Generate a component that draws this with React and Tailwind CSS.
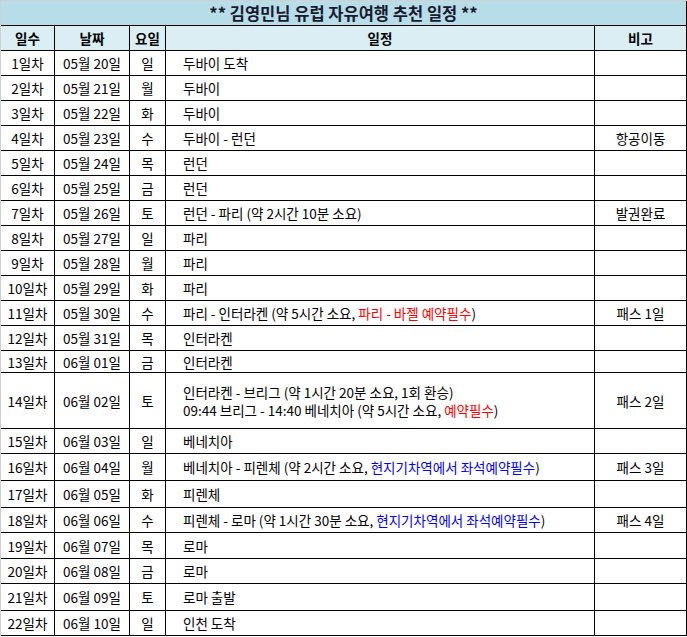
const rows = [
  { n: "1일차", d: "05월 20일", w: "일", plan: [["두바이 도착"]], h: 25 },
  { n: "2일차", d: "05월 21일", w: "월", plan: [["두바이"]], h: 25 },
  { n: "3일차", d: "05월 22일", w: "화", plan: [["두바이"]], h: 25 },
  { n: "4일차", d: "05월 23일", w: "수", plan: [["두바이 - 런던"]], note: "항공이동", h: 25 },
  { n: "5일차", d: "05월 24일", w: "목", plan: [["런던"]], h: 25 },
  { n: "6일차", d: "05월 25일", w: "금", plan: [["런던"]], h: 25 },
  { n: "7일차", d: "05월 26일", w: "토", plan: [["런던 - 파리 (약 2시간 10분 소요)"]], note: "발권완료", h: 25 },
  { n: "8일차", d: "05월 27일", w: "일", plan: [["파리"]], h: 25 },
  { n: "9일차", d: "05월 28일", w: "월", plan: [["파리"]], h: 25 },
  { n: "10일차", d: "05월 29일", w: "화", plan: [["파리"]], h: 25 },
  {
    n: "11일차", d: "05월 30일", w: "수",
    plan: [["파리 - 인터라켄 (약 5시간 소요, ", ["red", "파리 - 바젤 예약필수"], ")"]],
    note: "패스 1일", h: 25,
  },
  { n: "12일차", d: "05월 31일", w: "목", plan: [["인터라켄"]], h: 25 },
  { n: "13일차", d: "06월 01일", w: "금", plan: [["인터라켄"]], h: 22 },
  {
    n: "14일차", d: "06월 02일", w: "토",
    plan: [
      ["인터라켄 - 브리그 (약 1시간 20분 소요, 1회 환승)"],
      ["09:44 브리그 - 14:40 베네치아 (약 5시간 소요, ", ["red", "예약필수"], ")"],
    ],
    note: "패스 2일", h: 56,
  },
  { n: "15일차", d: "06월 03일", w: "일", plan: [["베네치아"]], h: 25 },
  {
    n: "16일차", d: "06월 04일", w: "월",
    plan: [["베네치아 - 피렌체 (약 2시간 소요, ", ["blue", "현지기차역에서 좌석예약필수"], ")"]],
    note: "패스 3일", h: 27,
  },
  { n: "17일차", d: "06월 05일", w: "화", plan: [["피렌체"]], h: 27 },
  {
    n: "18일차", d: "06월 06일", w: "수",
    plan: [["피렌체 - 로마 (약 1시간 30분 소요, ", ["blue", "현지기차역에서 좌석예약필수"], ")"]],
    note: "패스 4일", h: 25,
  },
  { n: "19일차", d: "06월 07일", w: "목", plan: [["로마"]], h: 26 },
  { n: "20일차", d: "06월 08일", w: "금", plan: [["로마"]], h: 25 },
  { n: "21일차", d: "06월 09일", w: "토", plan: [["로마 출발"]], h: 27 },
  { n: "22일차", d: "06월 10일", w: "일", plan: [["인천 도착"]], h: 25 },
];

const cell = "flex items-center justify-center border-r border-black";

function Line({ parts }) {
  return (
    <div>
      {parts.map((p, i) =>
        typeof p === "string" ? (
          <span key={i}>{p}</span>
        ) : (
          <span key={i} className={p[0] === "red" ? "text-[#ff0000]" : "text-[#0000ff]"}>
            {p[1]}
          </span>
        )
      )}
    </div>
  );
}

export default function App() {
  return (
    <div
      className="w-[687px] bg-white border-l border-t border-[#d0d0d0] text-[13.5px] text-black leading-[18px]"
      style={{ fontFamily: '"Noto Sans CJK KR", "Noto Sans", sans-serif' }}
    >
      {/* title */}
      <div className="h-[25px] flex items-center justify-center bg-[#b7dde8] border-r border-b border-black font-bold text-[16.5px] text-[#1a1a2e]">
        ** 김영민님 유럽 자유여행 추천 일정 **
      </div>

      {/* header */}
      <div className="h-[25px] flex bg-[#daeef3] border-b border-black font-bold">
        <div className={`${cell} w-[54px]`}>일수</div>
        <div className={`${cell} w-[75px]`}>날짜</div>
        <div className={`${cell} w-[36px]`}>요일</div>
        <div className={`${cell} w-[429px]`}>일정</div>
        <div className={`${cell} w-[92px]`}>비고</div>
      </div>

      {rows.map((r) => (
        <div key={r.n} className="flex border-b border-black" style={{ height: r.h }}>
          <div className={`${cell} w-[54px]`}>{r.n}</div>
          <div className={`${cell} w-[75px]`}>{r.d}</div>
          <div className={`${cell} w-[36px]`}>{r.w}</div>
          <div className="w-[429px] flex flex-col justify-center pl-[17px] border-r border-black">
            {r.plan.map((l, i) => (
              <Line key={i} parts={l} />
            ))}
          </div>
          <div className={`${cell} w-[92px]`}>{r.note}</div>
        </div>
      ))}
    </div>
  );
}
